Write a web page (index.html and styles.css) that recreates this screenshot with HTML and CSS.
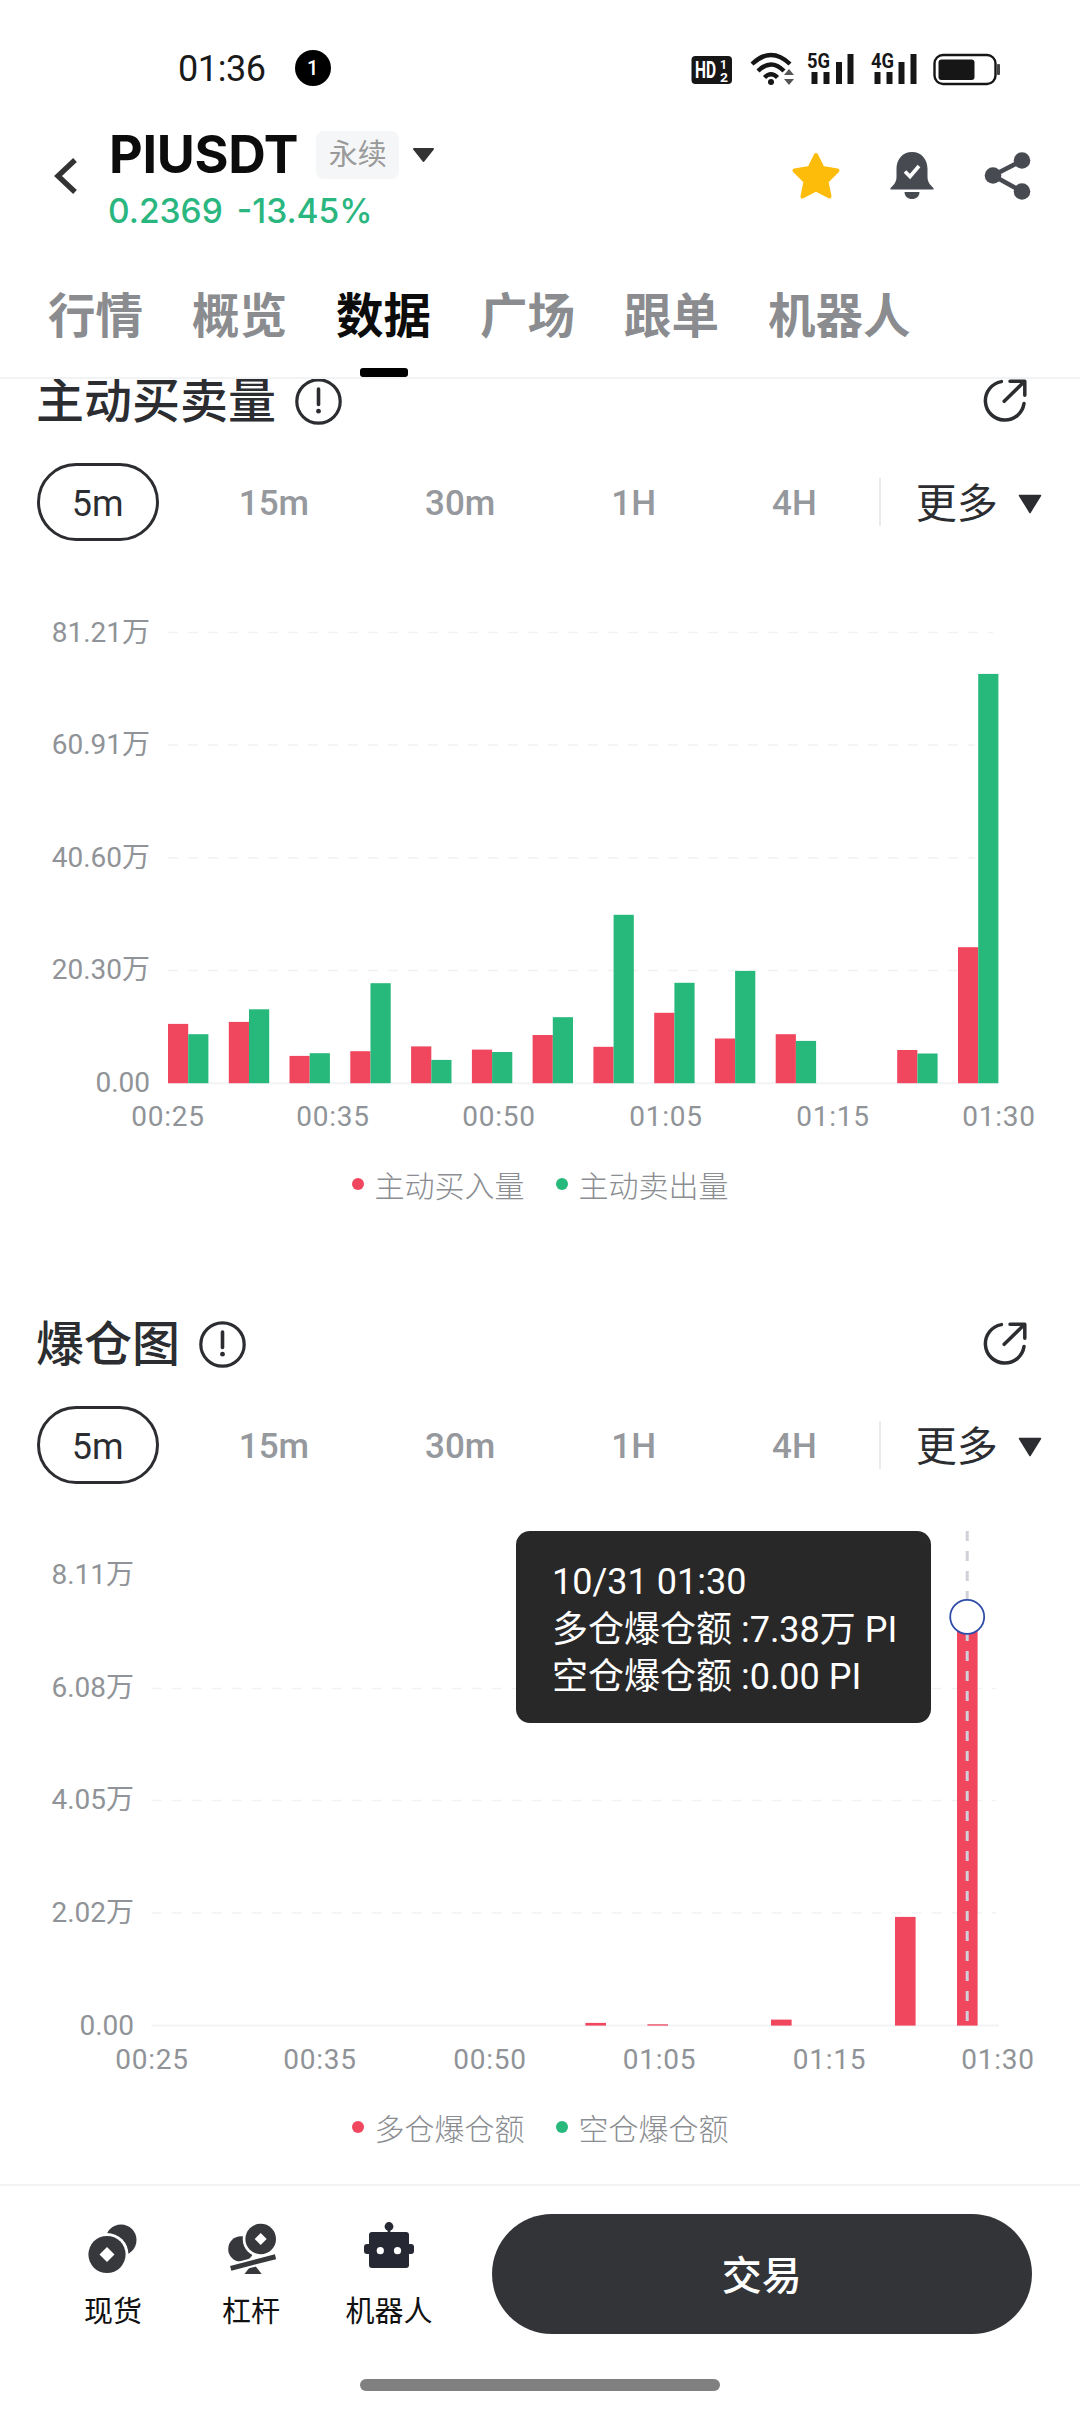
FILE: index.html
```html
<!DOCTYPE html>
<html lang="zh-CN">
<head>
<meta charset="utf-8">
<title>PIUSDT 数据</title>
<link rel="stylesheet" href="styles.css">
</head>
<body>
<div class="phone">
  <div class="status">
    <span class="clock">01:36</span>
    <span class="notif">1</span>
    <svg class="sys-icons" viewBox="688 50 314 40" width="314" height="40">
      <rect x="691.5" y="56" width="40.5" height="28" rx="4" fill="#161616"/>
      <text class="sys-hd" x="695" y="78" textLength="21" lengthAdjust="spacingAndGlyphs">HD</text>
      <text class="sys-frac" x="720" y="69" textLength="7" lengthAdjust="spacingAndGlyphs">1</text>
      <text class="sys-frac" x="720" y="82" textLength="8" lengthAdjust="spacingAndGlyphs">2</text>
      <g fill="none" stroke="#161616" stroke-width="4.4">
        <path d="M752 64 Q771 46 790 64"/>
        <path d="M758 71 Q771 58 784 71"/>
        <path d="M764.5 77.5 Q771 71 777.5 77.5"/>
      </g>
      <circle cx="771" cy="82" r="3" fill="#161616"/>
      <path d="M784 75h10l-5-6zM784 79h10l-5 6z" fill="#555"/>
      <text class="sys-net" x="807" y="68" textLength="23" lengthAdjust="spacingAndGlyphs">5G</text>
      <g fill="#161616">
        <rect x="811.5" y="72" width="6" height="12"/>
        <rect x="823.5" y="72" width="6" height="12"/>
        <rect x="836" y="62" width="6" height="22"/>
        <rect x="847.5" y="54" width="6" height="30"/>
      </g>
      <text class="sys-net" x="871" y="68" textLength="23" lengthAdjust="spacingAndGlyphs">4G</text>
      <g fill="#161616">
        <rect x="874.5" y="72" width="6" height="12"/>
        <rect x="886.5" y="72" width="6" height="12"/>
        <rect x="898.5" y="62" width="6" height="22"/>
        <rect x="910.5" y="54" width="6" height="30"/>
      </g>
      <rect x="934.5" y="55" width="61" height="29" rx="8.5" fill="none" stroke="#161616" stroke-width="2.4"/>
      <rect x="938.5" y="59.5" width="36" height="20.5" rx="3" fill="#161616"/>
      <rect x="997" y="64" width="3" height="11" rx="1" fill="#444"/>
    </svg>
  </div>

  <header class="head">
    <svg class="back" viewBox="0 0 24 38" width="24" height="38">
      <polyline points="21,3 4,19 21,35" fill="none" stroke="#333" stroke-width="5.4"/>
    </svg>
    <div class="pair">
      <div class="pair-row">
        <span class="symbol">PIUSDT</span>
        <span class="tag">永续</span>
        <svg class="caret-top" viewBox="0 0 23 16" width="23" height="16"><polygon points="2,2 21,2 11.5,14" fill="#333" stroke="#333" stroke-width="2" stroke-linejoin="round"/></svg>
      </div>
      <div class="quote"><span>0.2369</span><span>-13.45%</span></div>
    </div>
    <div class="actions">
      <svg viewBox="0 0 50 48" width="50" height="48">
        <polygon points="25,3 31.5,16 46.5,18.5 35.5,29.5 38.5,44.5 25,37.5 11.5,44.5 14.5,29.5 3.5,18.5 18.5,16" fill="#fdbb0a" stroke="#fdbb0a" stroke-width="4" stroke-linejoin="round"/>
      </svg>
      <svg viewBox="0 0 50 48" width="50" height="48">
        <path d="M25 0C15.5 0 9.5 7.5 9.5 17V25C9.5 30.5 6.5 33 3.5 36V37.5H46.5V36C43.5 33 40.5 30.5 40.5 25V17C40.5 7.5 34.5 0 25 0Z" fill="#484a52"/>
        <path d="M17.5 40H32.5C32.5 44.5 29 47 25 47S17.5 44.5 17.5 40Z" fill="#484a52"/>
        <polyline points="18,19.5 23,24.5 32,14" fill="none" stroke="#fff" stroke-width="3.6"/>
      </svg>
      <svg viewBox="0 0 50 48" width="50" height="48">
        <g stroke="#484a52" stroke-width="4.6" fill="#484a52">
          <line x1="39" y1="8.5" x2="10" y2="23.5"/>
          <line x1="10" y1="23.5" x2="39" y2="39.5"/>
        </g>
        <circle cx="39" cy="8.5" r="8.3" fill="#484a52"/>
        <circle cx="10" cy="23.5" r="8.3" fill="#484a52"/>
        <circle cx="39" cy="39.5" r="8.3" fill="#484a52"/>
      </svg>
    </div>
  </header>

  <nav class="tabs">
    <span class="tab">行情</span>
    <span class="tab">概览</span>
    <span class="tab tab-on">数据</span>
    <span class="tab">广场</span>
    <span class="tab">跟单</span>
    <span class="tab">机器人</span>
  </nav>

  <main class="content">
    <section class="panel">
      <div class="panel-head">
        <div class="panel-title">
          <h2>主动买卖量</h2>
          <svg viewBox="0 0 47 47" width="47" height="47">
            <circle cx="23.5" cy="23.5" r="21.7" fill="none" stroke="#2b2d31" stroke-width="3.2"/>
            <line x1="23.5" y1="11" x2="23.5" y2="26.5" stroke="#2b2d31" stroke-width="3.6" stroke-linecap="round"/>
            <circle cx="23.5" cy="33.2" r="2.4" fill="#2b2d31"/>
          </svg>
        </div>
        <svg viewBox="0 0 44 44" width="44" height="44" fill="none" stroke="#2b2d31" stroke-width="3.5" stroke-linecap="round" stroke-linejoin="round">
          <path d="M18.4 2.6A19.4 19.4 0 1 0 41 24.5"/>
          <path d="M21.2 22.3L40.8 3M27 2.3H41.8V16.3"/>
        </svg>
      </div>
      <div class="ranges">
        <span class="range-on">5m</span>
        <span class="range">15m</span>
        <span class="range">30m</span>
        <span class="range">1H</span>
        <span class="range">4H</span>
        <i class="range-rule"></i>
        <span class="more">更多</span>
        <svg class="caret-more" viewBox="0 0 24 20" width="24" height="20"><polygon points="1.5,1.5 22.5,1.5 12,18.5" fill="#2b2d31" stroke="#2b2d31" stroke-width="1.5" stroke-linejoin="round"/></svg>
      </div>
      <div class="chart">
        <svg class="plot" viewBox="0 571 1080 583" width="1080" height="583">
          <g class="grid">
            <line x1="168" y1="632.4" x2="993" y2="632.4"/>
            <line x1="168" y1="745" x2="975" y2="745"/>
            <line x1="168" y1="857.8" x2="975" y2="857.8"/>
            <line x1="168" y1="970.5" x2="975" y2="970.5"/>
          </g>
          <line class="base" x1="168" y1="1083.2" x2="998" y2="1083.2"/>
          <g class="axis">
            <text x="150" y="642" text-anchor="end">81.21万</text>
            <text x="150" y="754" text-anchor="end">60.91万</text>
            <text x="150" y="867" text-anchor="end">40.60万</text>
            <text x="150" y="979" text-anchor="end">20.30万</text>
            <text x="150" y="1092" text-anchor="end">0.00</text>
          </g>
          <g class="axis axis-time">
            <text x="168" y="1126" text-anchor="middle">00:25</text>
            <text x="333" y="1126" text-anchor="middle">00:35</text>
            <text x="499" y="1126" text-anchor="middle">00:50</text>
            <text x="666" y="1126" text-anchor="middle">01:05</text>
            <text x="833" y="1126" text-anchor="middle">01:15</text>
            <text x="999" y="1126" text-anchor="middle">01:30</text>
          </g>
          <g class="bar-buy">
            <rect x="168" y="1023.9" width="20.2" height="59.3"/>
            <rect x="228.8" y="1021.9" width="20.2" height="61.3"/>
            <rect x="289.5" y="1055.9" width="20.2" height="27.3"/>
            <rect x="350.3" y="1051.2" width="20.2" height="32"/>
            <rect x="411.1" y="1046.4" width="20.2" height="36.8"/>
            <rect x="471.9" y="1049.6" width="20.2" height="33.6"/>
            <rect x="532.6" y="1035" width="20.2" height="48.2"/>
            <rect x="593.4" y="1046.8" width="20.2" height="36.4"/>
            <rect x="654.2" y="1012.8" width="20.2" height="70.4"/>
            <rect x="714.9" y="1038.5" width="20.2" height="44.7"/>
            <rect x="775.7" y="1034.2" width="20.2" height="49"/>
            <rect x="897.2" y="1050" width="20.2" height="33.2"/>
            <rect x="958" y="947.2" width="20.2" height="136"/>
          </g>
          <g class="bar-sell">
            <rect x="188.2" y="1034.2" width="20.2" height="49"/>
            <rect x="249" y="1009.3" width="20.2" height="73.9"/>
            <rect x="309.7" y="1053.2" width="20.2" height="30"/>
            <rect x="370.5" y="983.2" width="20.2" height="100"/>
            <rect x="431.3" y="1059.9" width="20.2" height="23.3"/>
            <rect x="492.1" y="1052" width="20.2" height="31.2"/>
            <rect x="552.8" y="1017.2" width="20.2" height="66"/>
            <rect x="613.6" y="914.8" width="20.2" height="168.4"/>
            <rect x="674.4" y="982.8" width="20.2" height="100.4"/>
            <rect x="735.1" y="970.9" width="20.2" height="112.3"/>
            <rect x="795.9" y="1040.9" width="20.2" height="42.3"/>
            <rect x="917.4" y="1053.5" width="20.2" height="29.7"/>
            <rect x="978.2" y="673.9" width="20.2" height="409.3"/>
          </g>
        </svg>
      </div>
      <div class="legend">
        <span class="legend-item"><i class="dot dot-red"></i>主动买入量</span>
        <span class="legend-item"><i class="dot dot-green"></i>主动卖出量</span>
      </div>
    </section>

    <section class="panel">
      <div class="panel-head">
        <div class="panel-title">
          <h2>爆仓图</h2>
          <svg viewBox="0 0 47 47" width="47" height="47">
            <circle cx="23.5" cy="23.5" r="21.7" fill="none" stroke="#2b2d31" stroke-width="3.2"/>
            <line x1="23.5" y1="11" x2="23.5" y2="26.5" stroke="#2b2d31" stroke-width="3.6" stroke-linecap="round"/>
            <circle cx="23.5" cy="33.2" r="2.4" fill="#2b2d31"/>
          </svg>
        </div>
        <svg viewBox="0 0 44 44" width="44" height="44" fill="none" stroke="#2b2d31" stroke-width="3.5" stroke-linecap="round" stroke-linejoin="round">
          <path d="M18.4 2.6A19.4 19.4 0 1 0 41 24.5"/>
          <path d="M21.2 22.3L40.8 3M27 2.3H41.8V16.3"/>
        </svg>
      </div>
      <div class="ranges">
        <span class="range-on">5m</span>
        <span class="range">15m</span>
        <span class="range">30m</span>
        <span class="range">1H</span>
        <span class="range">4H</span>
        <i class="range-rule"></i>
        <span class="more">更多</span>
        <svg class="caret-more" viewBox="0 0 24 20" width="24" height="20"><polygon points="1.5,1.5 22.5,1.5 12,18.5" fill="#2b2d31" stroke="#2b2d31" stroke-width="1.5" stroke-linejoin="round"/></svg>
      </div>
      <div class="chart">
        <svg class="plot" viewBox="0 1514 1080 583" width="1080" height="583">
          <g class="grid">
            <line x1="151.5" y1="1688.4" x2="996" y2="1688.4"/>
            <line x1="151.5" y1="1800.5" x2="996" y2="1800.5"/>
            <line x1="151.5" y1="1913" x2="996" y2="1913"/>
          </g>
          <line class="base" x1="151.5" y1="2025.6" x2="999" y2="2025.6"/>
          <g class="axis">
            <text x="134" y="1584" text-anchor="end">8.11万</text>
            <text x="134" y="1697" text-anchor="end">6.08万</text>
            <text x="134" y="1809" text-anchor="end">4.05万</text>
            <text x="134" y="1922" text-anchor="end">2.02万</text>
            <text x="134" y="2035" text-anchor="end">0.00</text>
          </g>
          <g class="axis axis-time">
            <text x="152" y="2069" text-anchor="middle">00:25</text>
            <text x="320" y="2069" text-anchor="middle">00:35</text>
            <text x="490" y="2069" text-anchor="middle">00:50</text>
            <text x="659.5" y="2069" text-anchor="middle">01:05</text>
            <text x="829.5" y="2069" text-anchor="middle">01:15</text>
            <text x="998" y="2069" text-anchor="middle">01:30</text>
          </g>
          <g class="bar-buy">
            <rect x="585.4" y="2022.9" width="20.6" height="2.7"/>
            <rect x="647.4" y="2024.3" width="20.6" height="1.3"/>
            <rect x="771" y="2019.6" width="20.6" height="6"/>
            <rect x="895" y="1916.9" width="20.6" height="108.7"/>
            <rect x="957" y="1617" width="20.6" height="408.6"/>
          </g>
          <line class="crosshair" x1="967.2" y1="1531" x2="967.2" y2="2025"/>
          <circle class="marker" cx="967.2" cy="1616.8" r="17"/>
        </svg>
        <div class="tooltip">
          <div>10/31 01:30</div>
          <div>多仓爆仓额 :7.38万 PI</div>
          <div>空仓爆仓额 :0.00 PI</div>
        </div>
      </div>
      <div class="legend">
        <span class="legend-item"><i class="dot dot-red"></i>多仓爆仓额</span>
        <span class="legend-item"><i class="dot dot-green"></i>空仓爆仓额</span>
      </div>
    </section>
  </main>

  <footer class="foot">
    <div class="foot-row">
      <div class="shortcut">
        <svg viewBox="0 0 50 54" width="50" height="54">
          <circle cx="33" cy="18" r="15.5" fill="#37383c"/>
          <circle cx="19" cy="32.5" r="21.5" fill="#fff"/>
          <circle cx="19" cy="32.5" r="18.6" fill="#37383c"/>
          <polygon points="19,25 26.5,32.5 19,40 11.5,32.5" fill="#fff"/>
        </svg>
        <span>现货</span>
      </div>
      <div class="shortcut">
        <svg viewBox="0 0 50 54" width="50" height="54">
          <circle cx="15" cy="27" r="12.8" fill="#37383c"/>
          <circle cx="34.7" cy="17" r="18" fill="#fff"/>
          <circle cx="34.7" cy="17" r="15.3" fill="#37383c"/>
          <polygon points="34.7,11 40.7,17 34.7,23 28.7,17" fill="#fff"/>
          <polygon points="27,41 18.5,52 35.7,52" fill="#37383c"/>
          <line x1="4.7" y1="46.3" x2="49.5" y2="34.7" stroke="#fff" stroke-width="9"/>
          <line x1="4.7" y1="46.3" x2="49.5" y2="34.7" stroke="#37383c" stroke-width="5"/>
        </svg>
        <span>杠杆</span>
      </div>
      <div class="shortcut">
        <svg viewBox="0 0 50 54" width="50" height="54">
          <circle cx="25" cy="4.5" r="4.4" fill="#262833"/>
          <rect x="23.7" y="6" width="2.6" height="6" fill="#262833"/>
          <rect x="5" y="10" width="40" height="36" rx="3" fill="#262833"/>
          <rect x="0" y="22" width="50" height="10" rx="3" fill="#262833"/>
          <circle cx="16.3" cy="28.7" r="3.6" fill="#fff"/>
          <circle cx="33.5" cy="28.7" r="3.6" fill="#fff"/>
        </svg>
        <span>机器人</span>
      </div>
      <button class="trade" type="button">交易</button>
    </div>
    <div class="home-bar"></div>
  </footer>
</div>
</body>
</html>
```
FILE: styles.css
```css
* { box-sizing: border-box; }

html, body {
  margin: 0;
  padding: 0;
  background: #fff;
}

body {
  font-family: Roboto, "Noto Sans CJK SC", sans-serif;
  color: #2b2d31;
}

.phone {
  width: 1080px;
  height: 2412px;
  display: flex;
  flex-direction: column;
  overflow: hidden;
  background: #fff;
}

/* system status row */
.status {
  height: 131px;
  padding: 50px 0 0 178px;
  display: flex;
  align-items: flex-start;
  flex: none;
}

.clock {
  font-size: 36px;
  line-height: 38px;
  color: #1a1a1a;
  letter-spacing: -0.4px;
}

.notif {
  width: 36px;
  height: 36px;
  margin-left: 29px;
  border-radius: 50%;
  background: #000;
  color: #fff;
  font-size: 20px;
  font-weight: 500;
  line-height: 36px;
  text-align: center;
}

.sys-icons { margin-left: auto; margin-right: 78px; }
.sys-hd { font: 700 23px Roboto, sans-serif; fill: #fff; }
.sys-frac { font: 700 13px Roboto, sans-serif; fill: #fff; }
.sys-net { font: 700 20px Roboto, sans-serif; fill: #161616; }

/* instrument header */
.head {
  height: 153px;
  flex: none;
  padding: 0 47px 0 54px;
  display: flex;
  align-items: flex-start;
}

.back { margin-top: 26px; margin-right: 31px; flex: none; }

.pair-row {
  display: flex;
  align-items: center;
  height: 48px;
}

.symbol {
  font-family: Inter, sans-serif;
  font-size: 52px;
  font-weight: 700;
  color: #0c0c0c;
  line-height: 48px;
  letter-spacing: -0.3px;
}

.tag {
  width: 83px;
  height: 48px;
  margin-left: 18px;
  border-radius: 8px;
  background: #f5f6f7;
  color: #9a9a9a;
  font-size: 29px;
  line-height: 48px;
  text-align: center;
}

.caret-top { margin-left: 13px; margin-top: 0; }

.quote {
  display: flex;
  gap: 14px;
  margin-top: 12px;
  margin-left: -1px;
  font-family: Inter, sans-serif;
  font-size: 33.5px;
  font-weight: 500;
  line-height: 40px;
  color: #2ab67f;
}

.actions {
  margin-left: auto;
  margin-top: 21px;
  display: flex;
  gap: 46px;
}

/* section tabs */
.tabs {
  flex: none;
  height: 95px;
  padding-left: 48px;
  display: flex;
  gap: 49px;
  border-bottom: 2px solid #f2f3f4;
}

.tab {
  display: flex;
  flex-direction: column;
  align-items: center;
  font-size: 47.5px;
  font-weight: 700;
  line-height: 67px;
  color: #8a8c8f;
}

.tab::after {
  content: "";
  width: 48px;
  height: 9px;
  margin-top: 17px;
  border-radius: 3px;
  background: transparent;
}

.tab-on { color: #0c0c0c; }
.tab-on::after { background: #000; }

/* scrolling data panels */
.content {
  flex: 1;
  min-height: 0;
  overflow: hidden;
}

.panel { height: 943px; }
.panel:first-child { margin-top: -8px; }

.panel-head {
  height: 60px;
  padding: 0 53px 0 36px;
  display: flex;
  align-items: center;
  justify-content: space-between;
}

.panel-title {
  display: flex;
  align-items: center;
  gap: 19px;
}

.panel-title h2 {
  margin: 0;
  padding-top: 2px;
  font-size: 48px;
  font-weight: 500;
  line-height: 60px;
  color: #2b2d31;
}

.ranges {
  margin-top: 32px;
  height: 78px;
  padding: 0 37px;
  display: flex;
  align-items: center;
}

.range-on {
  flex: none;
  width: 121.5px;
  height: 78px;
  margin-right: 22.3px;
  border: 3px solid #2b2d31;
  border-radius: 39px;
  font-size: 36px;
  line-height: 76px;
  text-align: center;
  color: #2b2d31;
}

.range {
  flex: none;
  padding: 3px 58px 0;
  font-size: 35px;
  font-weight: 500;
  color: #95989c;
}

.range-rule {
  flex: none;
  width: 2px;
  height: 48px;
  margin-left: 4px;
  margin-right: 35px;
  background: #e9ebee;
}

.more {
  flex: none;
  margin-top: 4px;
  font-size: 41px;
  line-height: 48px;
  color: #2b2d31;
  white-space: nowrap;
}

.caret-more { flex: none; margin-top: 3px; margin-left: 20px; }

.chart {
  position: relative;
  margin-top: 30px;
  height: 583px;
}

.plot { display: block; }

.grid line {
  stroke: #f1f2f4;
  stroke-width: 1.5;
  stroke-dasharray: 10 10;
}

.base { stroke: #f2f3f5; stroke-width: 2; }

.axis text {
  font-family: Roboto, "Noto Sans CJK SC", sans-serif;
  font-size: 28px;
  fill: #909397;
}

.axis-time text { letter-spacing: 0.8px; }

.bar-buy { fill: #f0475f; }
.bar-sell { fill: #27b97c; }

.crosshair {
  stroke: #cfd0d8;
  stroke-width: 3;
  stroke-dasharray: 10 10;
}

.marker {
  fill: #fff;
  stroke: #2f4ca8;
  stroke-width: 1.8;
}

.tooltip {
  position: absolute;
  left: 516px;
  top: 17px;
  width: 415px;
  height: 192px;
  padding: 28px 0 0 36px;
  border-radius: 14px;
  background: #282828;
  color: #fff;
  font-size: 36px;
  line-height: 47.5px;
  white-space: nowrap;
}

.legend {
  height: 60px;
  display: flex;
  align-items: center;
  justify-content: center;
  gap: 31px;
}

.legend-item {
  display: flex;
  align-items: center;
  gap: 11px;
  font-size: 30px;
  font-weight: 300;
  color: #8a8d91;
}

.dot {
  width: 12px;
  height: 12px;
  border-radius: 50%;
}

.dot-red { background: #f0475f; }
.dot-green { background: #27b97c; }

/* bottom bar */
.foot {
  flex: none;
  height: 228px;
  border-top: 2px solid #f2f3f4;
  padding-top: 28px;
}

.foot-row {
  display: flex;
  align-items: flex-start;
  padding-left: 44px;
}

.shortcut {
  width: 138px;
  margin-top: 8px;
  display: flex;
  flex-direction: column;
  align-items: center;
  gap: 16px;
  font-size: 29px;
  line-height: 40px;
  color: #111;
}

.trade {
  width: 540.5px;
  height: 120px;
  margin-left: 33.5px;
  padding-bottom: 3px;
  border: 0;
  border-radius: 60px;
  background: #323437;
  color: #fff;
  font-family: Roboto, "Noto Sans CJK SC", sans-serif;
  font-size: 40px;
  font-weight: 500;
}

.home-bar {
  width: 360px;
  height: 12px;
  margin: 45px auto 0;
  border-radius: 6px;
  background: #808080;
}
```
